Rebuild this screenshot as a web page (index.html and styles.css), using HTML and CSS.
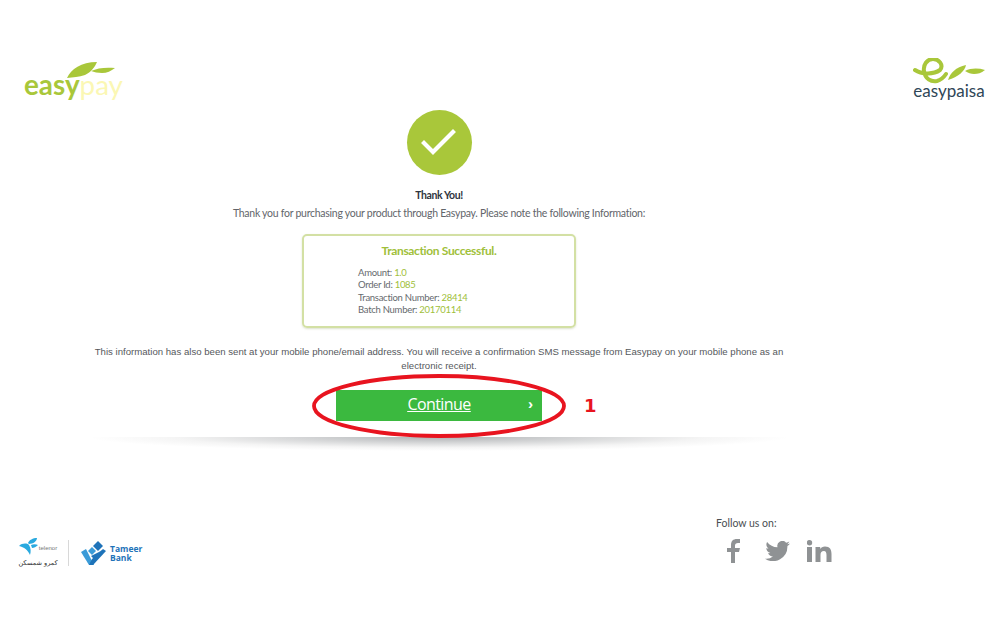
FILE: index.html
```html
<!DOCTYPE html>
<html lang="en">
<head>
<meta charset="utf-8">
<title>Easypay</title>
<link rel="stylesheet" href="styles.css">
</head>
<body>
<div class="page">
  <header class="top">
    <div class="logo-easypay">
      <svg class="leaves" width="48" height="17" viewBox="0 0 48 17"><path fill="#a9c73a" d="M0 17C4 8 14 1 30 1c-2 5-6 10-12 13-6 2-12 2-18 3z"/><path fill="#a9c73a" d="M24 10c6-3 15-4 24-3-4 3-8 5-13 5-4 0-8-1-11-2z"/></svg>
      <span class="wordmark"><span class="easy">easy</span><span class="pay">pay</span></span>
    </div>
    <div class="logo-paisa">
      <svg width="72" height="26" viewBox="0 0 72 26"><path fill="none" stroke="#a9c73a" stroke-width="4" stroke-linecap="round" d="M2 12C8 16 20 17 27 12 31 7 26 1 20 1 14 1 10 7 11 13 12 21 18 24 24 23 28 22 31 19 33 16"/><path fill="#a9c73a" d="M35 22c2-7 8-13 18-15-1 6-8 12-18 15z"/><path fill="#a9c73a" d="M52 13c6-3 13-3 20-1-4 3-7 4-11 4-3 0-6-1-9-3z"/></svg>
      <span class="paisa-text">easypaisa</span>
    </div>
  </header>

  <main class="content">
    <div class="check">
      <svg width="36" height="30" viewBox="0 0 36 30"><path fill="none" stroke="#fff" stroke-width="4.2" stroke-linecap="square" d="M3 15l9 9L32 4"/></svg>
    </div>
    <h1 class="thanks">Thank You!</h1>
    <p class="note">Thank you for purchasing your product through Easypay. Please note the following Information:</p>

    <section class="card">
      <h2 class="card-title">Transaction Successful.</h2>
      <ul class="facts">
        <li>Amount: <b>1.0</b></li>
        <li>Order Id: <b>1085</b></li>
        <li>Transaction Number: <b>28414</b></li>
        <li>Batch Number: <b>20170114</b></li>
      </ul>
    </section>

    <p class="info">This information has also been sent at your mobile phone/email address. You will receive a confirmation SMS message from Easypay on your mobile phone as an electronic receipt.</p>

    <div class="action">
      <a class="btn" href="#"><span class="btn-label">Continue</span><span class="chev">›</span></a>
      <svg class="ring" width="256" height="66" viewBox="0 0 256 66"><ellipse cx="128" cy="33" rx="125" ry="30" fill="none" stroke="#e8141f" stroke-width="3.8"/></svg>
      <span class="step">1</span>
    </div>
    <div class="divider"></div>
  </main>

  <footer class="bottom">
    <div class="partners">
      <div class="telenor">
        <div class="tel-top">
          <svg width="20" height="17" viewBox="0 0 20 17"><g fill="#29a9df"><path d="M9 5C10 2 14 0 18 0 18 3 14 6 10 6z"/><path d="M0 8C3 5 8 5 10 7 12 10 12 14 11 17 9 12 5 9 0 8z"/><path d="M12 7C14 6 17 6 19 7 17 9 15 10 13 10z"/></g></svg>
          <span class="tel-name">telenor</span>
        </div>
        <span class="urdu" lang="ur">کمرو شمسکن</span>
      </div>
      <div class="sep"></div>
      <svg width="26" height="24" viewBox="0 0 26 24"><path fill="#3a9bd8" d="M0 11l5-3 5 10 3 6H8z"/><path fill="#1e73b9" d="M8 24l3-6 11-10 3 2-13 14z"/><path fill="#1e73b9" d="M17 0l5 5-5 5-5-5z"/><path fill="#3a9bd8" d="M11 6l4 4-4 4-4-4z"/><path fill="#1e73b9" d="M18 11l3-2-8 9-3-3z"/></svg>
      <span class="tameer">Tameer<br>Bank</span>
    </div>
    <div class="follow">
      <span class="follow-label">Follow us on:</span>
      <div class="socials">
        <svg width="13" height="24" viewBox="0 0 13 24"><path fill="#8f9294" d="M4 24V13H0V9h4V6c0-4 2-6 6-6h3v4h-2c-2 0-3 1-3 2.500V9h5l-1 4H8v11z"/></svg>
        <svg class="bird" width="25" height="20" viewBox="0 0 25 20"><path fill="#8f9294" d="M25 2.400c-.9.4-1.900.7-2.900.8 1-.6 1.800-1.600 2.200-2.800-1 .6-2 1-3.200 1.300A5 5 0 0 0 12.500 6.300C8.300 6.100 4.600 4.100 2.100.9 .7 3.200 1.400 6.100 3.600 7.600c-.8 0-1.600-.2-2.300-.6 0 2.400 1.700 4.500 4.100 5-.8.200-1.500.2-2.300.1.700 2 2.600 3.400 4.800 3.500A10.300 10.300 0 0 1 0 17.700 14.500 14.500 0 0 0 22.400 5c1-.7 1.900-1.600 2.600-2.600z"/></svg>
        <svg width="25" height="22" viewBox="0 0 25 22"><path fill="#8f9294" d="M0 7h5v15H0zM2.500 0a2.700 2.700 0 1 1 0 5.400 2.700 2.700 0 0 1 0-5.400zM8.500 7h4.700v2.100C14 7.700 15.700 6.600 18 6.600c4.900 0 6.500 3 6.500 7.500V22h-5v-7c0-2-.5-4-2.600-4-2.300 0-3.400 1.600-3.400 4v7h-5z"/></svg>
      </div>
    </div>
  </footer>
</div>
</body>
</html>
```

FILE: styles.css
```css
* { box-sizing: border-box; }
html, body { margin: 0; padding: 0; background: #fff; }
.page {
  width: 1000px;
  height: 626px;
  overflow: hidden;
  display: flex;
  flex-direction: column;
  font-family: "Lato", "Liberation Sans", sans-serif;
  color: #55585c;
}
.top {
  height: 110px;
  padding: 58px 15px 0 24px;
  display: flex;
  justify-content: space-between;
  align-items: flex-start;
}
.logo-easypay { position: relative; width: 100px; height: 44px; }
.leaves { position: absolute; left: 43px; top: 3px; }
.wordmark {
  position: absolute;
  left: 0;
  top: 10px;
  font: 700 27.800px/34px "Lato", sans-serif;
  white-space: nowrap;
}
.easy { color: #a9c73a; }
.pay { color: #fbf7b4; font-weight: 400; }
.logo-paisa { display: flex; flex-direction: column; align-items: center; width: 72px; }
.paisa-text {
  font: 400 17px/16px "Lato", sans-serif;
  color: #2f4657;
  margin-top: -1px;
}
.content {
  width: 700px;
  margin-left: 89px;
  display: flex;
  flex-direction: column;
  align-items: center;
}
.check {
  width: 65px;
  height: 65px;
  border-radius: 50%;
  background: #a9c73a;
  display: flex;
  align-items: center;
  justify-content: center;
}
.thanks {
  margin: 13px 0 0;
  font: 700 10.500px/14px "Lato", sans-serif;
  letter-spacing: -0.4px;
  color: #2f3540;
}
.note {
  margin: 4px 0 0;
  font: 400 10.500px/14px "Lato", sans-serif;
  letter-spacing: -0.27px;
  color: #62656a;
}
.card {
  width: 274px;
  height: 94px;
  margin-top: 14px;
  border: 2px solid #d3e0a4;
  border-radius: 5px;
  box-shadow: 0 1px 2px rgba(120, 140, 60, .25);
  padding: 7px 0 0 54px;
}
.card-title {
  margin: 0 0 8px -54px;
  text-align: center;
  font: 700 12px/16px "Lato", sans-serif;
  letter-spacing: -0.35px;
  color: #a0c03a;
}
.facts { margin: 0; padding: 0; list-style: none; font-size: 9.500px; line-height: 12.400px; letter-spacing: -0.28px; color: #666a6e; }
.facts b { font-weight: 400; color: #a0c03a; }
.info {
  margin: 17px 0 0;
  width: 700px;
  text-align: center;
  font: 400 9.620px/13.500px "Liberation Sans", sans-serif;
  color: #55585c;
}
.action {
  position: relative;
  width: 206px;
  height: 31px;
  margin-top: 18px;
}
.btn {
  height: 31px;
  width: 206px;
  background: #3bb93f;
  display: flex;
  align-items: center;
  justify-content: center;
  padding-bottom: 3px;
  position: relative;
  color: #fff;
}
.btn-label {
  font: 500 16px/20px "Open Sans", sans-serif;
  letter-spacing: -0.6px;
  text-decoration: underline;
}
.chev {
  position: absolute;
  right: 9px;
  top: 4px;
  font: 700 15px/20px "Liberation Sans", sans-serif;
}
.ring { position: absolute; left: -25px; top: -17px; }
.step {
  position: absolute;
  left: 248px;
  top: 4px;
  font: 700 18px/24px "DejaVu Sans", sans-serif;
  color: #e8141f;
}
.divider {
  width: 700px;
  height: 14px;
  margin-top: 16px;
  background: radial-gradient(ellipse 50% 100% at 50% 0, rgba(90, 95, 100, .48), rgba(150, 150, 150, .1) 75%, rgba(255, 255, 255, 0) 100%);
}
.bottom {
  flex: 1;
  padding: 65px 168px 0 18px;
  display: flex;
  justify-content: space-between;
  align-items: flex-start;
}
.partners { display: flex; align-items: center; margin-top: 22px; }
.telenor { display: flex; flex-direction: column; align-items: center; width: 40px; }
.tel-top { display: flex; align-items: center; }
.tel-name { font: 400 6px/8px "Liberation Sans", sans-serif; color: #777; margin-top: 2px; }
.urdu { font: 400 6.500px/8px "DejaVu Sans", sans-serif; color: #333; margin-top: 4px; }
.sep { width: 1px; height: 26px; background: #d8d8d8; margin: 0 12px 0 10px; }
.tameer {
  font: 700 8.500px/9px "Open Sans", sans-serif;
  color: #1e73b9;
  margin-left: 3px;
}
.follow { display: flex; flex-direction: column; width: 116px; }
.follow-label { font: 400 10.500px/14px "Lato", sans-serif; color: #4a4e52; }
.socials { display: flex; align-items: center; gap: 17px; margin-top: 9px; padding-left: 11px; }
.bird { margin-left: 8px; }
```
